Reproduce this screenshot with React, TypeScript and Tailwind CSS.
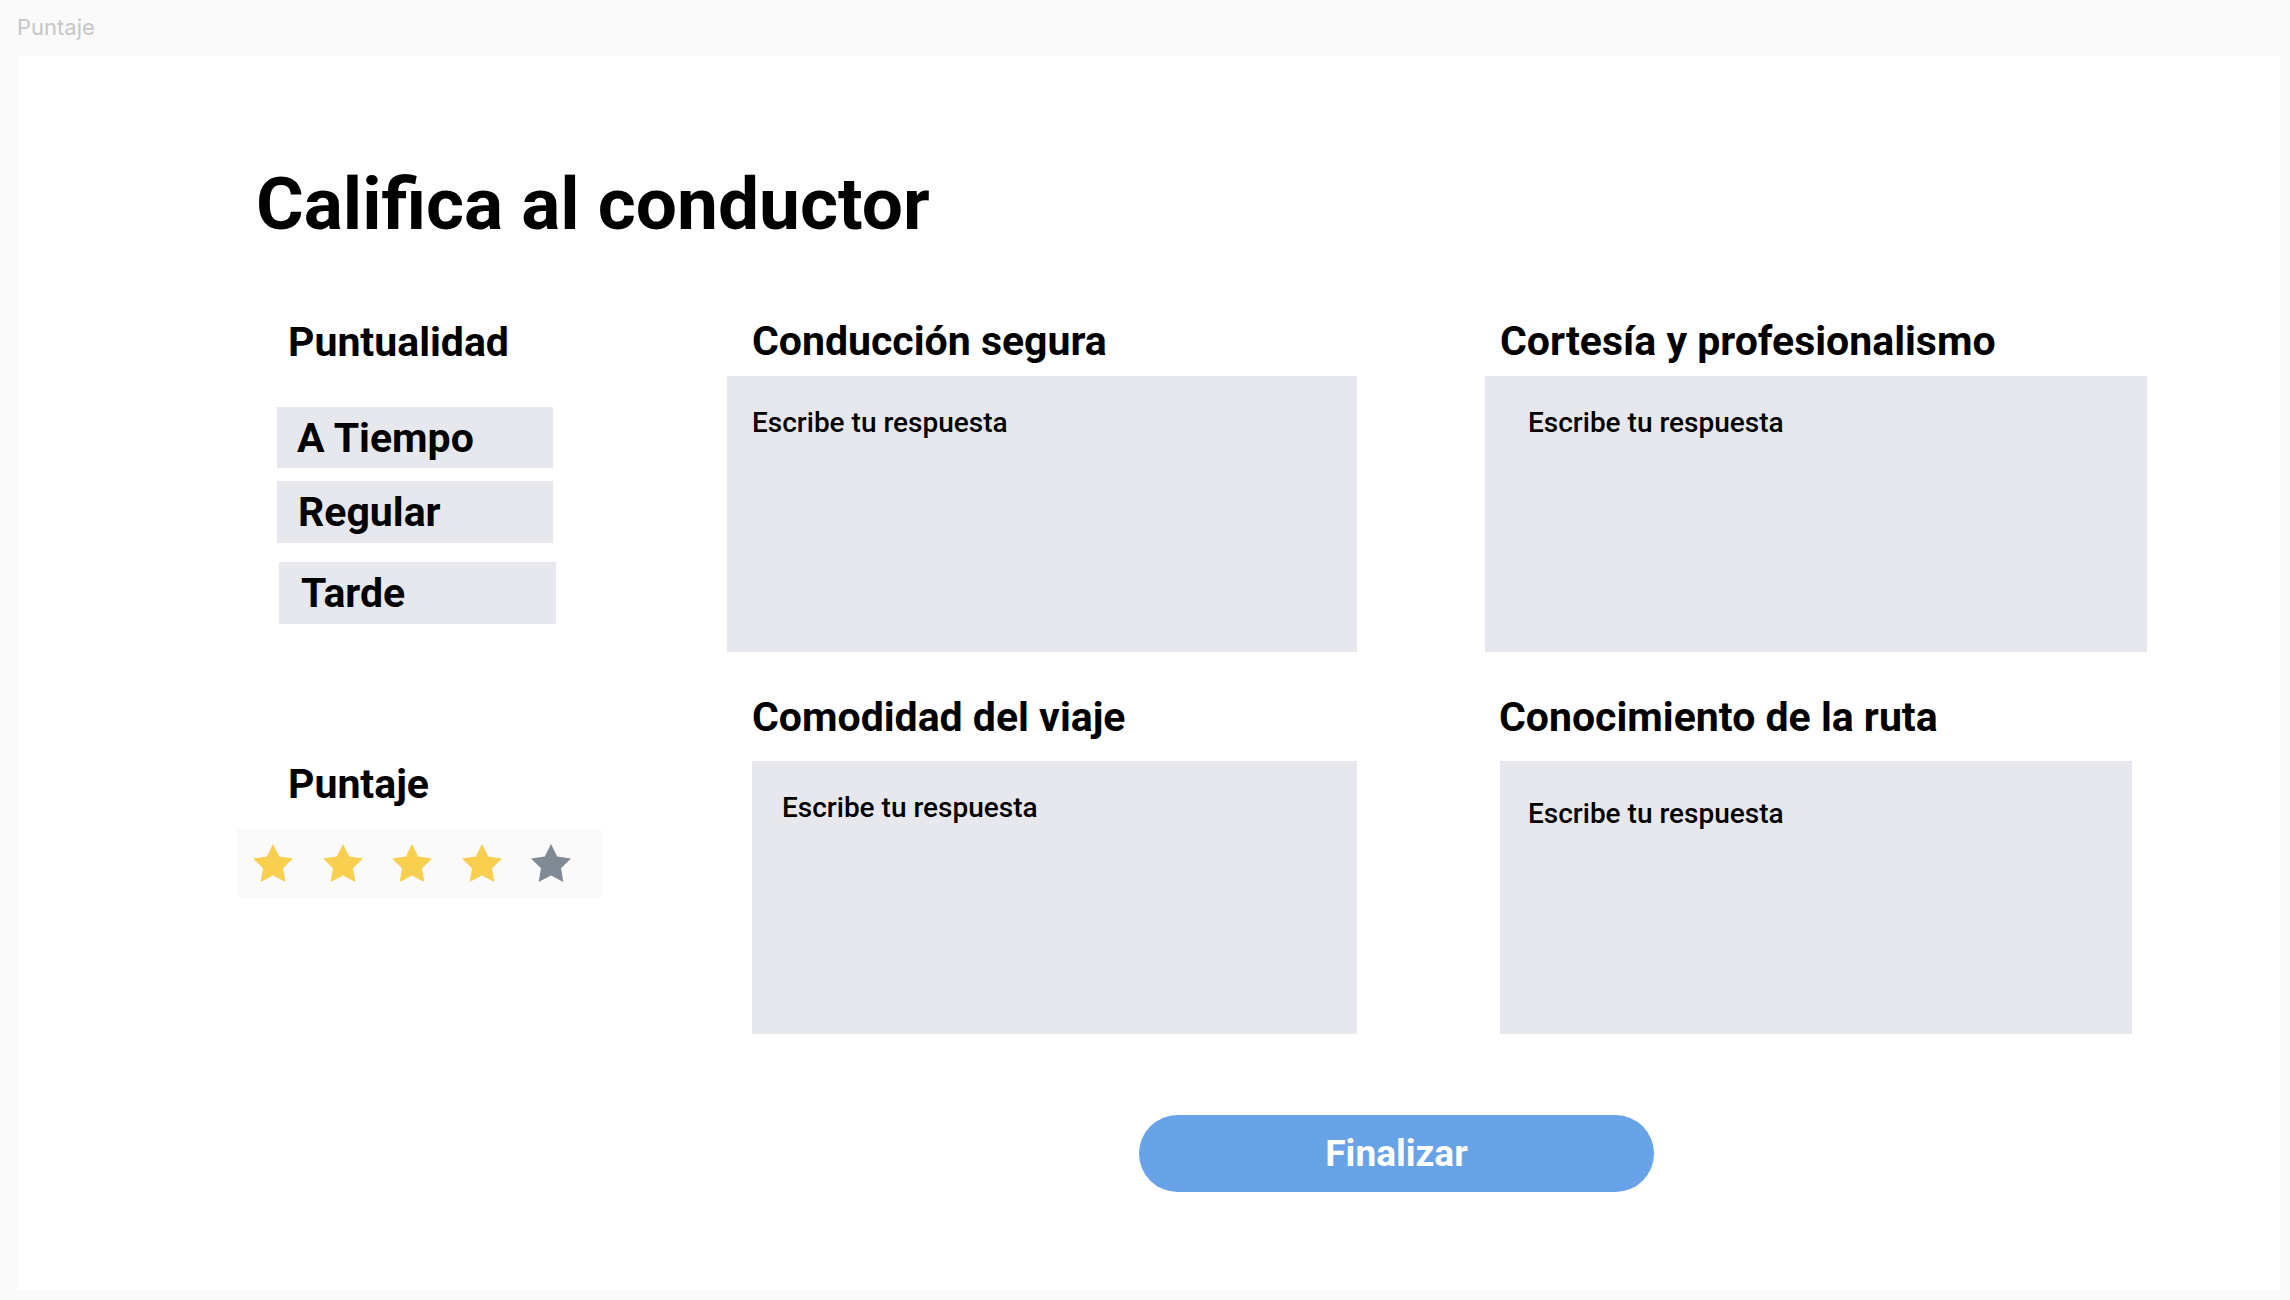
import React from "react";

const roboto = { fontFamily: "Roboto, 'Liberation Sans', sans-serif" };

function Star({ color }: { color: string }) {
  return (
    <svg width="40" height="38" viewBox="2 2 20 19.02" className="block">
      <polygon
        points="12,2 15.09,8.26 22,9.27 17,14.14 18.18,21.02 12,17.77 5.82,21.02 7,14.14 2,9.27 8.91,8.26"
        fill={color}
      />
    </svg>
  );
}

function Heading({ children, className = "" }: { children: React.ReactNode; className?: string }) {
  return (
    <div className={"text-[41px] leading-[48px] font-bold text-black whitespace-nowrap " + className}>
      {children}
    </div>
  );
}

function AnswerBox({ className }: { className: string }) {
  return (
    <div className={"bg-[#e7e8ed] " + className}>
      <div className="text-[28px] leading-[33px] font-medium text-black whitespace-nowrap">
        Escribe tu respuesta
      </div>
    </div>
  );
}

export default function App() {
  return (
    <div className="w-[2290px] h-[1300px] bg-[#fafafa] overflow-hidden">
      <div
        className="h-[56px] pl-[17px] pt-[14px] text-[22px] leading-[27px] text-[#c6c6c6]"
        style={{ fontFamily: "Inter, 'Noto Sans', sans-serif" }}
      >
        Puntaje
      </div>
      <div className="ml-[17px] w-[2263px] h-[1234px] bg-white flex flex-col" style={roboto}>
        <div className="mt-[105px] ml-[239px] text-[73px] leading-[86px] font-bold text-black whitespace-nowrap">
          Califica al conductor
        </div>

        <div className="mt-[70px] flex flex-row items-start">
          {/* left column */}
          <div className="ml-[220px] w-[490px] flex flex-col items-start">
            <Heading className="mt-[1px] ml-[51px]">Puntualidad</Heading>
            <div className="mt-[41px] ml-[40px] w-[276px] h-[61px] bg-[#e7e8ed] flex items-center pl-[20px]">
              <span className="text-[41px] leading-[48px] font-bold">A Tiempo</span>
            </div>
            <div className="mt-[13px] ml-[40px] w-[276px] h-[62px] bg-[#e7e8ed] flex items-center pl-[21px]">
              <span className="text-[41px] leading-[48px] font-bold">Regular</span>
            </div>
            <div className="mt-[19px] ml-[42px] w-[277px] h-[62px] bg-[#e7e8ed] flex items-center pl-[22px]">
              <span className="text-[41px] leading-[48px] font-bold">Tarde</span>
            </div>
            <Heading className="mt-[136px] ml-[51px]">Puntaje</Heading>
            <div className="mt-[21px] w-[365px] h-[68px] bg-[#fafafa] flex items-center pl-[16px] gap-[29.5px]">
              <Star color="#f8cf4e" />
              <Star color="#f8cf4e" />
              <Star color="#f8cf4e" />
              <Star color="#f8cf4e" />
              <Star color="#808a94" />
            </div>
          </div>

          {/* middle column */}
          <div className="w-[758px] flex flex-col items-start">
            <Heading className="ml-[25px]">Conducción segura</Heading>
            <AnswerBox className="mt-[11px] w-[630px] h-[276px] pl-[25px] pt-[30px]" />
            <Heading className="mt-[41px] ml-[25px]">Comodidad del viaje</Heading>
            <AnswerBox className="mt-[20px] ml-[25px] w-[605px] h-[273px] pl-[30px] pt-[30px]" />
          </div>

          {/* right column */}
          <div className="flex flex-col items-start">
            <Heading className="ml-[15px]">Cortesía y profesionalismo</Heading>
            <AnswerBox className="mt-[11px] w-[662px] h-[276px] pl-[43px] pt-[30px]" />
            <Heading className="mt-[41px] ml-[14px]">Conocimiento de la ruta</Heading>
            <AnswerBox className="mt-[20px] ml-[15px] w-[632px] h-[273px] pl-[28px] pt-[36px]" />
          </div>
        </div>

        <div className="mt-[81px] ml-[1122px] w-[515px] h-[77px] rounded-full bg-[#68a3e8] flex items-center justify-center">
          <span className="text-[37px] leading-[43px] font-bold text-white">Finalizar</span>
        </div>
      </div>
    </div>
  );
}
